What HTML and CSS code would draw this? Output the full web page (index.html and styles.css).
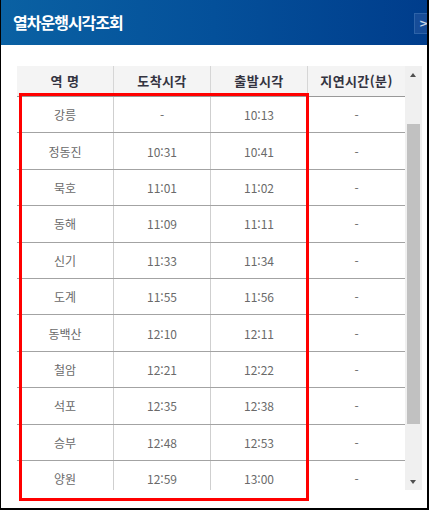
FILE: index.html
```html
<!DOCTYPE html>
<html lang="ko">
<head>
<meta charset="utf-8">
<link rel="stylesheet" href="styles.css">
</head>
<body>
<div class="window">
  <div class="titlebar">
    <h1 class="title">열차운행시각조회</h1>
    <span class="close">&gt;</span>
  </div>
  <div class="content">
    <div class="grid">
      <div class="table">
        <div class="row head">
          <div class="cell">역 명</div>
          <div class="cell">도착시각</div>
          <div class="cell">출발시각</div>
          <div class="cell">지연시간(분)</div>
        </div>
        <div class="body">
          <div class="row"><div class="cell">강릉</div><div class="cell">-</div><div class="cell">10:13</div><div class="cell">-</div></div>
          <div class="row"><div class="cell">정동진</div><div class="cell">10:31</div><div class="cell">10:41</div><div class="cell">-</div></div>
          <div class="row"><div class="cell">묵호</div><div class="cell">11:01</div><div class="cell">11:02</div><div class="cell">-</div></div>
          <div class="row"><div class="cell">동해</div><div class="cell">11:09</div><div class="cell">11:11</div><div class="cell">-</div></div>
          <div class="row"><div class="cell">신기</div><div class="cell">11:33</div><div class="cell">11:34</div><div class="cell">-</div></div>
          <div class="row"><div class="cell">도계</div><div class="cell">11:55</div><div class="cell">11:56</div><div class="cell">-</div></div>
          <div class="row"><div class="cell">동백산</div><div class="cell">12:10</div><div class="cell">12:11</div><div class="cell">-</div></div>
          <div class="row"><div class="cell">철암</div><div class="cell">12:21</div><div class="cell">12:22</div><div class="cell">-</div></div>
          <div class="row"><div class="cell">석포</div><div class="cell">12:35</div><div class="cell">12:38</div><div class="cell">-</div></div>
          <div class="row"><div class="cell">승부</div><div class="cell">12:48</div><div class="cell">12:53</div><div class="cell">-</div></div>
          <div class="row"><div class="cell">양원</div><div class="cell">12:59</div><div class="cell">13:00</div><div class="cell">-</div></div>
        </div>
      </div>
      <div class="scrollbar">
        <span class="arrow up"></span>
        <span class="thumb"></span>
        <span class="arrow down"></span>
      </div>
    </div>
  </div>
  <div class="highlight"></div>
</div>
</body>
</html>
```

FILE: styles.css
```css
html, body {
  margin: 0;
  padding: 0;
  background: #ffffff;
}
body {
  font-family: "Noto Sans CJK KR", "Noto Sans", sans-serif;
}
.window {
  position: relative;
  width: 426px;
  height: 508px;
  border-left: 1px solid #000;
  border-right: 2px solid #000;
  border-bottom: 2px solid #000;
  background: #fff;
  overflow: hidden;
}
.titlebar {
  height: 45px;
  display: flex;
  align-items: center;
  background: linear-gradient(90deg, #0a61a3 0%, #04509a 50%, #003d8c 100%);
  overflow: hidden;
}
.title {
  margin: 0 0 2px 12px;
  color: #fff;
  font-size: 16px;
  font-weight: 700;
  letter-spacing: -1px;
  line-height: 20px;
}
.close {
  margin-left: auto;
  margin-right: -10px;
  width: 17px;
  height: 19px;
  border: 1px solid #2d63a8;
  background: #164c98;
  color: #c9d4e6;
  font-family: "DejaVu Sans", sans-serif;
  font-size: 11px;
  font-weight: 700;
  line-height: 19px;
  padding-left: 4px;
  box-sizing: content-box;
  margin-top: 2px;
}
.content {
  padding: 21px 0 0 16px;
}
.grid {
  display: flex;
  height: 424px;
}
.table {
  width: 388px;
  display: flex;
  flex-direction: column;
}
.row {
  display: flex;
  height: 35.4px;
  border-bottom: 1px solid #a3a3a3;
}
.cell {
  width: 97px;
  flex: none;
  display: flex;
  align-items: center;
  justify-content: center;
  box-sizing: border-box;
  border-right: 1px solid #cfcfcf;
  font-size: 12px;
  color: #6a6a6a;
}
.cell:last-child {
  border-right: none;
}
.row.head {
  height: 30px;
  background: #f4f4f4;
  border-bottom: 1px solid #999;
}
.head .cell {
  font-size: 13px;
  font-weight: 700;
  color: #333340;
  letter-spacing: 0.4px;
  padding-bottom: 1px;
  border-right-color: #d6d6d6;
}
.body {
  flex: 1;
  overflow: hidden;
}
.scrollbar {
  width: 17px;
  background: #f0f0f0;
  position: relative;
}
.arrow {
  position: absolute;
  left: 5px;
  width: 0;
  height: 0;
  border-left: 3.5px solid transparent;
  border-right: 3.5px solid transparent;
}
.arrow.up {
  top: 7px;
  border-bottom: 4px solid #505050;
}
.arrow.down {
  top: 414px;
  border-top: 4px solid #505050;
}
.thumb {
  position: absolute;
  left: 2px;
  top: 58px;
  width: 13px;
  height: 300px;
  background: #c1c1c1;
}
.highlight {
  position: absolute;
  left: 18px;
  top: 93px;
  width: 284px;
  height: 402px;
  border: 3px solid #ff0000;
}
```
